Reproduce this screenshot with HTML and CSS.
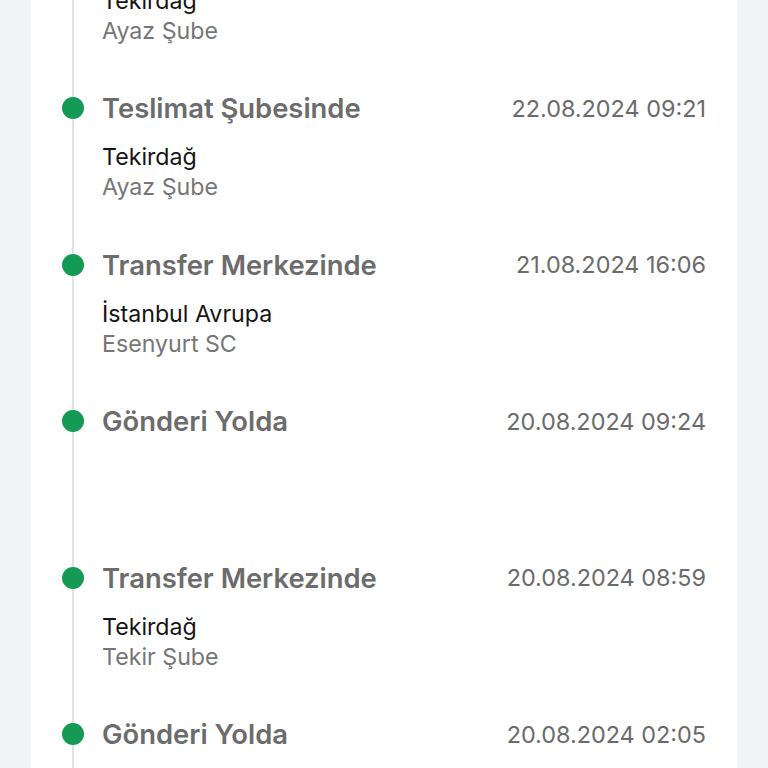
FILE: index.html
```html
<!DOCTYPE html>
<html lang="tr">

<head>
  <meta charset="UTF-8" />
  <meta name="viewport" content="width=device-width, initial-scale=1.0" />
  <title>Gönderi Hareketleri</title>
  <link rel="stylesheet" href="styles.css">
</head>

<body>
  <div class="card">
    <ul class="timeline">
      <li class="step">
        <div class="rail"><span class="dot"></span></div>
        <div class="step-body">
          <div class="step-head">
            <div class="status">Teslimat Şubesinde</div>
            <div class="date">22.08.2024 10:02</div>
          </div>
          <div class="city">Tekirdağ</div>
          <div class="branch">Ayaz Şube</div>
        </div>
      </li>
      <li class="step">
        <div class="rail"><span class="dot"></span></div>
        <div class="step-body">
          <div class="step-head">
            <div class="status">Teslimat Şubesinde</div>
            <div class="date">22.08.2024 09:21</div>
          </div>
          <div class="city">Tekirdağ</div>
          <div class="branch">Ayaz Şube</div>
        </div>
      </li>
      <li class="step">
        <div class="rail"><span class="dot"></span></div>
        <div class="step-body">
          <div class="step-head">
            <div class="status">Transfer Merkezinde</div>
            <div class="date">21.08.2024 16:06</div>
          </div>
          <div class="city">İstanbul Avrupa</div>
          <div class="branch">Esenyurt SC</div>
        </div>
      </li>
      <li class="step">
        <div class="rail"><span class="dot"></span></div>
        <div class="step-body">
          <div class="step-head">
            <div class="status">Gönderi Yolda</div>
            <div class="date">20.08.2024 09:24</div>
          </div>
        </div>
      </li>
      <li class="step">
        <div class="rail"><span class="dot"></span></div>
        <div class="step-body">
          <div class="step-head">
            <div class="status">Transfer Merkezinde</div>
            <div class="date">20.08.2024 08:59</div>
          </div>
          <div class="city">Tekirdağ</div>
          <div class="branch">Tekir Şube</div>
        </div>
      </li>
      <li class="step">
        <div class="rail"><span class="dot"></span></div>
        <div class="step-body">
          <div class="step-head">
            <div class="status">Gönderi Yolda</div>
            <div class="date">20.08.2024 02:05</div>
          </div>
        </div>
      </li>
    </ul>
  </div>
</body>

</html>
```

FILE: styles.css
```css
* {
  box-sizing: border-box;
}

html,
body {
  height: 100%;
  overflow: hidden;
}

body {
  font-family: Inter, "Noto Sans", sans-serif;
  margin: 0;
  background-color: #f3f4f6;
}

/* liste kaydırılmış halde görünüyor */
.card {
  margin: -66.5px 31px 0 31px;
  background-color: #fff;
  padding-right: 31px;
}

.timeline {
  list-style: none;
  margin: 0;
  padding: 0;
}

.step {
  display: grid;
  grid-template-columns: 71px 1fr;
  height: 156.5px;
}

.rail {
  background: linear-gradient(#e2e2e2, #e2e2e2) no-repeat 41px 0 / 2px 100%;
}

.dot {
  display: block;
  width: 22px;
  height: 22px;
  border-radius: 50%;
  background-color: #149a55;
  margin: 7px 0 0 31px;
}

.step-head {
  display: flex;
  justify-content: space-between;
  align-items: center;
  height: 36px;
}

.status {
  font-size: 27.4px;
  font-weight: 600;
  color: #6c6c6c;
}

.date {
  font-size: 23.4px;
  color: #6b6b6b;
}

.city {
  margin-top: 16px;
  font-size: 23.2px;
  line-height: 30px;
  color: #151515;
}

.branch {
  font-size: 23.2px;
  line-height: 30px;
  color: #767676;
}
```
